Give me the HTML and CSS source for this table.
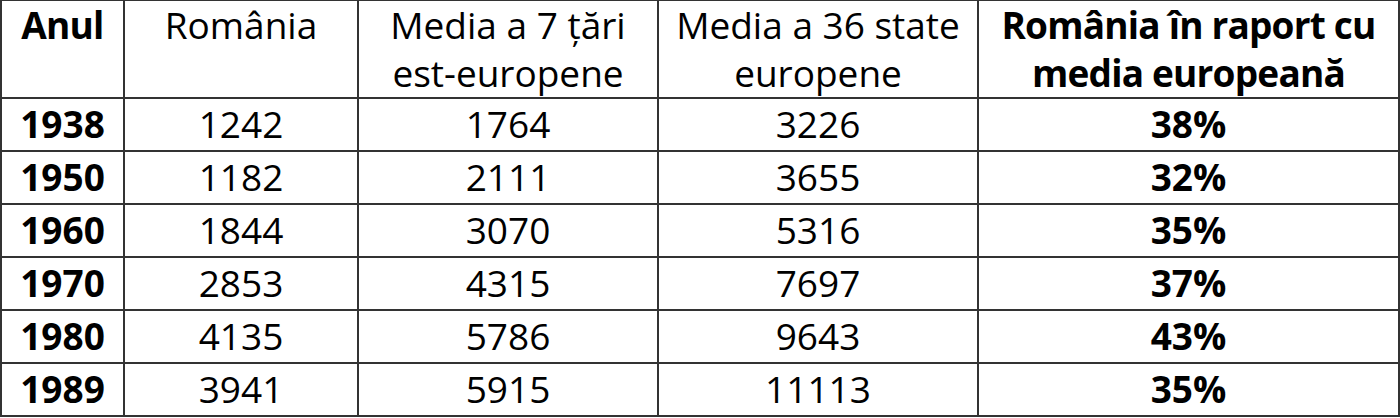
FILE: index.html
```html
<!DOCTYPE html>
<html lang="ro">
<head>
<meta charset="utf-8">
<title>România în raport cu media europeană</title>
<link rel="stylesheet" href="styles.css">
</head>
<body>
<table class="data">
  <colgroup>
    <col class="c1"><col class="c2"><col class="c3"><col class="c4"><col class="c5">
  </colgroup>
  <thead>
    <tr>
      <th class="b">Anul</th>
      <th>România</th>
      <th>Media a 7 țări<br>est-europene</th>
      <th>Media a 36 state<br>europene</th>
      <th class="b">România în raport cu<br>media europeană</th>
    </tr>
  </thead>
  <tbody>
    <tr><td class="b">1938</td><td>1242</td><td>1764</td><td>3226</td><td class="b">38%</td></tr>
    <tr><td class="b">1950</td><td>1182</td><td>2111</td><td>3655</td><td class="b">32%</td></tr>
    <tr><td class="b">1960</td><td>1844</td><td>3070</td><td>5316</td><td class="b">35%</td></tr>
    <tr><td class="b">1970</td><td>2853</td><td>4315</td><td>7697</td><td class="b">37%</td></tr>
    <tr><td class="b">1980</td><td>4135</td><td>5786</td><td>9643</td><td class="b">43%</td></tr>
    <tr><td class="b">1989</td><td>3941</td><td>5915</td><td>11113</td><td class="b">35%</td></tr>
  </tbody>
</table>
</body>
</html>
```
FILE: styles.css
```css
html, body {
  margin: 0;
  padding: 0;
  background: #fff;
}
.data {
  border-collapse: collapse;
  table-layout: fixed;
  width: 1398px;
  margin: -1px 0 0 0;
  font-family: "Open Sans", "Liberation Sans", sans-serif;
  font-size: 37px;
  color: #000;
}
.c1 { width: 123px; }
.c2 { width: 234px; }
.c3 { width: 300px; }
.c4 { width: 320px; }
.c5 { width: 421px; }
.data th, .data td {
  border: 2px solid #333;
  text-align: center;
  vertical-align: middle;
  line-height: 48px;
  padding: 0;
  font-weight: 400;
  white-space: nowrap;
}
.data th {
  vertical-align: top;
}
.data td {
  padding: 1px 0 2px;
}
.data .b {
  font-weight: 700;
}
.data th.b {
  letter-spacing: -0.8px;
}
```
